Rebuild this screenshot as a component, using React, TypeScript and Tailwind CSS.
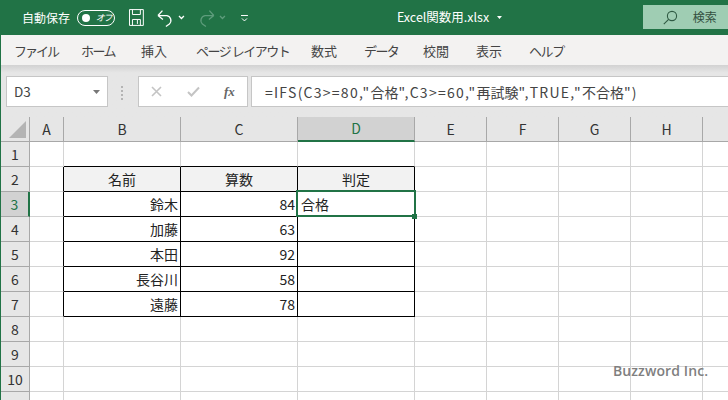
import { Fragment } from 'react';

const FONT = '"Noto Sans CJK JP", sans-serif';
const COLS = ['A', 'B', 'C', 'D', 'E', 'F', 'G', 'H', ''];
const ROWS = [1, 2, 3, 4, 5, 6, 7, 8, 9, 10, 11];
const TABS = [
  ['ファイル', 'w-[38px] ml-[13px] tracking-[-2px]'],
  ['ホーム', 'w-[32px] ml-[29px] tracking-[-1.6px]'],
  ['挿入', 'w-[25px] ml-[28px]'],
  ['ページ レイアウト', 'w-[86px] ml-[30px] tracking-[-1.5px]'],
  ['数式', 'w-[26px] ml-[29px]'],
  ['データ', 'w-[31px] ml-[27px] tracking-[-1.6px]'],
  ['校閲', 'w-[25px] ml-[28px]'],
  ['表示', 'w-[26px] ml-[28px]'],
  ['ヘルプ', 'w-[32px] ml-[27px] tracking-[-1.4px]'],
];
const DATA: Record<number, [string, string, string]> = {
  2: ['名前', '算数', '判定'],
  3: ['鈴木', '84', '合格'],
  4: ['加藤', '63', ''],
  5: ['本田', '92', ''],
  6: ['長谷川', '58', ''],
  7: ['遠藤', '78', ''],
};
// latin parts of the formula run wider than the kanji
const FORMULA = ['=IFS(C3>=80,"', '合格', '",C3>=60,"', '再試験', '",TRUE,"', '不合格', '")'];

function Caret({ className }: { className: string }) {
  return (
    <svg width="7" height="5" viewBox="0 0 7 5" className={className} fill="none" stroke="currentColor" strokeWidth="1.3">
      <path d="M1 1l2.5 2.5L6 1" />
    </svg>
  );
}

function TitleBar() {
  return (
    <div className="flex items-center h-[35px] bg-[#217346] text-white shrink-0 relative">
      <span className="ml-[22px] text-[12px] leading-none w-[48px] whitespace-nowrap">自動保存</span>
      <div className="ml-[7px] w-[38px] h-[16px] rounded-full border border-white flex items-center">
        <span className="ml-[4px] w-[8px] h-[8px] rounded-full bg-white" />
        <span className="ml-[6px] text-[9px] italic leading-none [font-feature-settings:'palt']">オフ</span>
      </div>
      <svg width="17" height="17" viewBox="0 0 17 17" className="ml-[13px]" fill="none" stroke="white" strokeWidth="1">
        <path d="M1.5.5h14v16h-14z" />
        <path d="M4.5.5v5h8v-5M4.5 16.5v-6h8v6M9.5 11v4" />
      </svg>
      <svg width="17" height="18" viewBox="0 0 17 18" className="ml-[13px]" fill="none" stroke="white" strokeWidth="1.3">
        <path d="M1 6.5h9a5 5 0 0 1 2.5 8.5L9 17.5M1 6.5l4.5-5M1 6.5l5 4" />
      </svg>
      <Caret className="ml-[4px] text-white" />
      <svg width="17" height="18" viewBox="0 0 17 18" className="ml-[13px]" fill="none" stroke="#5e9c7c" strokeWidth="1.3">
        <path d="M16 6.5H7a5 5 0 0 0-2.5 8.5L8 17.5M16 6.5l-4.5-5M16 6.5l-5 4" />
      </svg>
      <Caret className="ml-[4px] text-[#5e9c7c]" />
      <svg width="7" height="8" viewBox="0 0 7 8" className="ml-[15px]" fill="none" stroke="white">
        <path d="M0 1.5h7" />
        <path d="M1 4.5l2.5 2.5L6 4.5" />
      </svg>
      <span className="ml-[149px] text-[12.5px] leading-none w-[94px] whitespace-nowrap">Excel関数用.xlsx</span>
      <svg width="5" height="3" viewBox="0 0 5 3" className="ml-[7px]" fill="white">
        <path d="M0 0h5L2.5 3z" />
      </svg>
      <div className="ml-[141px] w-[86px] h-[24px] -mt-[1px] bg-[#9fcdb3] flex items-center text-[#33503f]">
        <svg width="15" height="15" viewBox="0 0 15 15" className="ml-[20px]" fill="none" stroke="#2f5a43" strokeWidth="1.1">
          <circle cx="9" cy="6" r="4.6" />
          <path d="M5.6 9.4L.8 14.2" />
        </svg>
        <span className="ml-[15px] text-[12px] leading-none whitespace-nowrap">検索</span>
      </div>
    </div>
  );
}

function TabBar() {
  return (
    <div className="flex items-center h-[30px] bg-[#f3f2f1] text-[#444444] text-[13px] shrink-0">
      {TABS.map(([label, cls]) => (
        <span key={label} className={`${cls} whitespace-nowrap leading-none`}>
          {label}
        </span>
      ))}
    </div>
  );
}

function FormulaBar() {
  return (
    <div className="h-[52px] shrink-0 bg-gradient-to-b from-[#d2d2d2] via-[#e6e6e6] via-[15%] to-[#e6e6e6] flex items-start pt-[11px]">
      <div className="ml-[5px] w-[102px] h-[31px] bg-white border border-[#c6c6c6] flex items-center justify-between text-[13.5px] text-[#444444]">
        <span className="ml-[7px] leading-none">D3</span>
        <svg width="7" height="4" viewBox="0 0 7 4" className="mr-[7px]" fill="#777777">
          <path d="M0 0h7L3.5 4z" />
        </svg>
      </div>
      <div className="ml-[13px] mt-[10px] w-[2px] flex flex-col gap-[2px]">
        <span className="h-[2px] bg-[#b4b4b4]" />
        <span className="h-[2px] bg-[#b4b4b4]" />
        <span className="h-[2px] bg-[#b4b4b4]" />
        <span className="h-[2px] bg-[#b4b4b4]" />
      </div>
      <div className="ml-[15px] w-[110px] h-[31px] bg-white border border-[#c6c6c6] flex items-center">
        <svg width="11" height="11" viewBox="0 0 11 11" className="ml-[12px]" stroke="#c4c4c4" strokeWidth="1.6">
          <path d="M1 1l9 9M10 1l-9 9" />
        </svg>
        <svg width="13" height="11" viewBox="0 0 13 11" className="ml-[25px]" fill="none" stroke="#c4c4c4" strokeWidth="2">
          <path d="M1 6l3.5 3.5L12 1.5" />
        </svg>
        <span className="ml-[24px] text-[13px] font-bold italic leading-none text-[#666666] [font-family:'Liberation_Serif',serif]">fx</span>
      </div>
      <div className="ml-[3px] flex-1 h-[31px] bg-white border-y border-l border-[#c6c6c6] flex items-center text-[14px] text-[#444444]">
        <span className="ml-[13px] leading-none whitespace-nowrap">
          {FORMULA.map((part, i) => (
            <span key={i} className={i % 2 === 0 ? 'tracking-[1.25px]' : ''}>
              {part}
            </span>
          ))}
        </span>
      </div>
    </div>
  );
}

function Sheet() {
  return (
    <div className="grid grid-cols-[29px_34px_117px_117px_117px_72px_72px_72px_72px_72px] grid-rows-[25px_repeat(11,25px)] bg-white flex-1 overflow-hidden">
      <div className="bg-[#e6e6e6] border-r border-b border-[#a8a8a8] relative">
        <svg width="17" height="17" viewBox="0 0 17 17" className="absolute right-[3px] bottom-[3px]" fill="#b4b4b4">
          <path d="M17 0v17H0z" />
        </svg>
      </div>
      {COLS.map((c) => (
        <div
          key={c}
          className={
            c === 'D'
              ? 'bg-[#d2d2d2] border-r border-[#a8a8a8] border-b-2 border-b-[#217346] flex items-center justify-center text-[14px] text-[#217346]'
              : 'bg-[#e6e6e6] border-r border-b border-[#a8a8a8] flex items-center justify-center text-[14px] text-[#333333]'
          }
        >
          {c}
        </div>
      ))}
      {ROWS.map((r) => (
        <Fragment key={r}>
          <div
            className={
              r === 3
                ? 'bg-[#d2d2d2] border-r-2 border-r-[#217346] border-b border-b-[#a8a8a8] flex items-center justify-center text-[14px] text-[#217346]'
                : 'bg-[#e6e6e6] border-r border-b border-[#a8a8a8] flex items-center justify-center text-[14px] text-[#333333]'
            }
          >
            {r}
          </div>
          {COLS.map((c) => (
            <Cell key={c} col={c} row={r} />
          ))}
        </Fragment>
      ))}
    </div>
  );
}

function Cell({ col, row }: { col: string; row: number }) {
  const idx = ['B', 'C', 'D'].indexOf(col);
  const inTable = idx >= 0 && row >= 2 && row <= 7;
  const aboveTable = idx >= 0 && row === 1;
  const leftOfTable = col === 'A' && row >= 2 && row <= 7;
  const right = inTable || leftOfTable ? 'border-r-black' : 'border-r-[#d4d4d4]';
  const bottom = inTable || aboveTable ? 'border-b-black' : 'border-b-[#d4d4d4]';
  const text = inTable ? DATA[row][idx] : '';
  const header = row === 2 && inTable;
  const align = header ? 'justify-center' : col === 'D' ? 'justify-start pl-[3px]' : 'justify-end pr-[2px]';
  const selected = col === 'D' && row === 3;
  return (
    <div
      className={`relative border-r border-b ${right} ${bottom} flex items-center ${align} text-[14px] leading-none text-[#222222] ${header ? 'bg-[#f2f2f2]' : ''}`}
    >
      {text}
      {selected && (
        <>
          <div className="absolute z-10 -left-[2px] -top-[2px] -right-[2px] -bottom-[1px] border-2 border-[#217346]" />
          <div className="absolute z-10 -right-[3px] -bottom-[3px] w-[5px] h-[5px] bg-[#217346]" />
        </>
      )}
    </div>
  );
}

export default function App() {
  return (
    <div className="relative w-[728px] h-[400px] overflow-hidden bg-[#217346]" style={{ fontFamily: FONT }}>
      <TitleBar />
      <div className="ml-[1px] h-[365px] flex flex-col overflow-hidden">
        <TabBar />
        <FormulaBar />
        <Sheet />
      </div>
      <span className="absolute z-20 left-[613px] top-[362px] text-[14px] font-semibold tracking-[0.1px] text-[#7f7f7f] leading-[18px] whitespace-nowrap [font-family:'Open_Sans',sans-serif]">
        Buzzword Inc.
      </span>
    </div>
  );
}
